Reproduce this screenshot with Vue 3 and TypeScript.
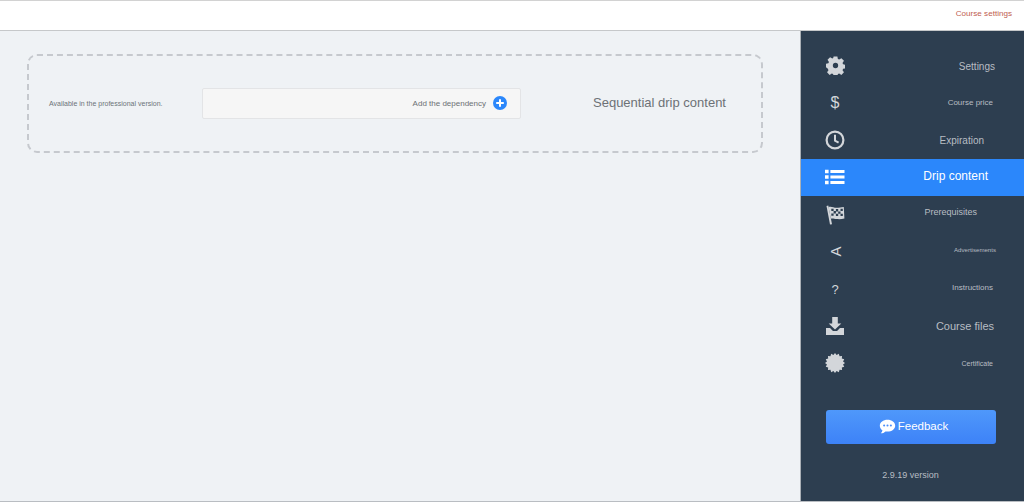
<script setup lang="ts">
interface Item { label: string; size: number; end: number; dy: number; icon: string; active?: boolean }
const items: Item[] = [
  { label: 'Settings', size: 10, end: 29, dy: 1, icon: 'gear' },
  { label: 'Course price', size: 8, end: 31, dy: -1, icon: 'dollar' },
  { label: 'Expiration', size: 10, end: 40, dy: 0, icon: 'clock' },
  { label: 'Drip content', size: 12, end: 36, dy: -1, icon: 'list', active: true },
  { label: 'Prerequisites', size: 9, end: 47, dy: -3, icon: 'flag' },
  { label: 'Advertisements', size: 6.1, end: 28, dy: -2, icon: 'ad' },
  { label: 'Instructions', size: 8, end: 31, dy: -2, icon: 'help' },
  { label: 'Course files', size: 11, end: 30, dy: 0, icon: 'download' },
  { label: 'Certificate', size: 7, end: 31, dy: 0, icon: 'badge' },
]
const burst = (() => {
  const pts: string[] = []
  for (let i = 0; i < 32; i++) {
    const r = i % 2 ? 8.2 : 10
    const a = (Math.PI * i) / 16
    pts.push(`${(10 + r * Math.cos(a)).toFixed(2)},${(10 + r * Math.sin(a)).toFixed(2)}`)
  }
  return pts.join(' ')
})()
</script>

<template>
  <div class="page">
    <header class="topbar"><span class="crumb">Course settings</span></header>
    <div class="body">
      <main class="main">
        <section class="drip">
          <span class="note">Available in the professional version.</span>
          <div class="dep">
            <span class="dep-label">Add the dependency</span>
            <svg class="plus" viewBox="0 0 14 14" width="14" height="14">
              <circle cx="7" cy="7" r="7" fill="#2b87fb" />
              <path d="M7 3.2v7.6M3.2 7h7.6" stroke="#fff" stroke-width="2" />
            </svg>
          </div>
          <h2 class="title">Sequential drip content</h2>
        </section>
      </main>
      <aside class="side">
        <nav class="nav">
          <div v-for="item in items" :key="item.label" class="row" :class="{ active: item.active }">
            <span class="icon">
              <svg v-if="item.icon === 'gear'" viewBox="0 0 20 20" width="19" height="19">
                <path fill="currentColor" fill-rule="evenodd" d="M8 .5h4l.5 2.700 1.400.6 2.300-1.500 2.700 2.800-1.500 2.200.6 1.400 2.500.5v3.800l-2.500.5-.6 1.400 1.500 2.200-2.700 2.800-2.300-1.500-1.400.6-.5 2.500H8l-.5-2.500-1.400-.6-2.300 1.500-2.700-2.800 1.500-2.200-.6-1.400L0 11.900V8.100l2.500-.5.600-1.400L1.600 4l2.700-2.800 2.300 1.500 1-.6zM10 7.200a2.800 2.800 0 1 0 0 5.600 2.800 2.800 0 0 0 0-5.600z" />
              </svg>
              <span v-else-if="item.icon === 'dollar'" class="glyph dollar">$</span>
              <svg v-else-if="item.icon === 'clock'" viewBox="0 0 20 20" width="20" height="20">
                <circle cx="10" cy="10" r="8.4" fill="none" stroke="currentColor" stroke-width="2.2" />
                <path d="M10 4.8v5.800l3.600 2" fill="none" stroke="currentColor" stroke-width="2" />
              </svg>
              <svg v-else-if="item.icon === 'list'" viewBox="0 0 20 16" width="20" height="16">
                <path fill="currentColor" d="M0 .8h3.600v3.400H0zM0 6.300h3.600v3.400H0zM0 11.800h3.600v3.400H0zM5.400 1.100H19.500v2.800H5.400zM5.400 6.600H19.500v2.800H5.400zM5.400 12.100H19.500v2.800H5.400z" />
              </svg>
              <svg v-else-if="item.icon === 'flag'" viewBox="0 0 20 20" width="20" height="20">
                <path fill="currentColor" d="M1.500 1 3.300.6l3.700 18.600-2 .4L3.600 12z" />
                <path fill="currentColor" d="M3.500 2c3-1 5 .8 8 .8 2.600 0 4.700-.6 7.300-.8l.6 11.500c-2.500.6-4.700 1-7.600.6-3-.4-4.300-.9-6-.3z" />
                <path fill="#2d3e50" d="M6.300 3.800h2.300v2.300H6.300zM10.900 4.100h2.300v2.300h-2.300zM15.500 3.800h2.300v2.300h-2.300zM8.600 6.100h2.300v2.300H8.600zM13.200 6.400h2.300v2.300h-2.300zM6.300 8.400h2.300v2.300H6.300zM10.900 8.700h2.300v2.300h-2.300zM15.500 8.700h2.300v2.300h-2.300z" />
              </svg>
              <span v-else-if="item.icon === 'ad'" class="glyph ad">A</span>
              <span v-else-if="item.icon === 'help'" class="glyph help">?</span>
              <svg v-else-if="item.icon === 'download'" viewBox="0 0 20 20" width="20" height="20">
                <path fill="currentColor" d="M7.200 1h5.600v6.500h3.500L10 13.500 3.700 7.500h3.500z" />
                <path fill="currentColor" d="M1 12h4l3 3h4l3-3h4v7H1z" />
              </svg>
              <svg v-else viewBox="0 0 20 20" width="20" height="20">
                <polygon fill="currentColor" :points="burst" />
              </svg>
            </span>
            <span class="label" :style="{ fontSize: item.size + 'px', marginRight: item.end + 'px', marginTop: item.dy * 2 + 'px' }">{{ item.label }}</span>
          </div>
        </nav>
        <button class="feedback" type="button">
          <svg viewBox="0 0 18 16" width="17" height="15">
            <path fill="#fff" d="M9 .8c4.500 0 8.200 2.800 8.200 6.300S13.500 13.400 9 13.400c-.8 0-1.500-.1-2.200-.2C5.500 14.500 3.800 15.200 1.800 15.300c1-.9 1.600-2 1.800-3.300C1.800 10.900.8 9.100.8 7.100.8 3.600 4.500.8 9 .8z" />
            <circle cx="5.400" cy="7" r="1.100" fill="#4a8ffb" />
            <circle cx="9" cy="7" r="1.100" fill="#4a8ffb" />
            <circle cx="12.600" cy="7" r="1.100" fill="#4a8ffb" />
          </svg>
          <span>Feedback</span>
        </button>
        <p class="version">2.9.19 version</p>
      </aside>
    </div>
  </div>
</template>

<style scoped>
.page {
  width: 1024px;
  height: 502px;
  display: flex;
  flex-direction: column;
  box-sizing: border-box;
  font-family: "Liberation Sans", Arial, sans-serif;
  background: #eff2f5;
  overflow: hidden;
  border-bottom: 1px solid #b9bdc2;
}
.topbar {
  height: 31px;
  box-sizing: border-box;
  flex: none;
  background: #fff;
  border-top: 1px solid #d2d2d2;
  border-bottom: 1px solid #c6c8ca;
  display: flex;
  align-items: center;
  justify-content: flex-end;
  padding: 0 12px 4px 0;
}
.crumb {
  font-size: 8.1px;
  color: #c0604f;
}
.body {
  flex: 1;
  display: flex;
  min-height: 0;
}
.main {
  flex: 1;
  min-width: 0;
  padding: 23px 37px 0 27px;
}
.drip {
  height: 99px;
  box-sizing: border-box;
  border: 2px dashed #c6c9ce;
  border-radius: 10px;
  display: flex;
  align-items: center;
  padding-left: 20px;
}
.note {
  width: 153px;
  flex: none;
  font-size: 7px;
  color: #6c7278;
}
.dep {
  width: 319px;
  height: 31px;
  box-sizing: border-box;
  flex: none;
  background: #f6f6f6;
  border: 1px solid #e3e4e6;
  border-radius: 2px;
  display: flex;
  align-items: center;
  justify-content: flex-end;
  gap: 7px;
  padding: 0 13px 1px 0;
}
.dep-label {
  font-size: 8px;
  color: #6c7074;
}
.plus {
  flex: none;
}
.title {
  margin: 0 0 2px 72px;
  font-size: 13px;
  font-weight: 400;
  color: #6d7176;
  white-space: nowrap;
}
.side {
  width: 224px;
  flex: none;
  box-sizing: border-box;
  background: #2d3e50;
  border-left: 1px solid #aab0b6;
  display: flex;
  flex-direction: column;
  padding-top: 16.3px;
}
.nav {
  display: grid;
  grid-auto-rows: 37.2px;
}
.row {
  display: flex;
  align-items: center;
  justify-content: space-between;
  padding-left: 24px;
  color: #b8bdc3;
}
.row.active {
  background: #2b87fb;
  color: #fff;
}
.icon {
  width: 20px;
  height: 20px;
  display: flex;
  align-items: center;
  justify-content: center;
  color: #d3d6da;
}
.row.active .icon {
  color: #fff;
}
.glyph {
  font-size: 16px;
  line-height: 1;
}
.ad {
  font-size: 15px;
  transform: rotate(-90deg);
}
.help {
  font-size: 13px;
}
.label {
  white-space: nowrap;
}
.feedback {
  margin: 28px 0 0 25px;
  width: 170px;
  height: 34px;
  border: 0;
  border-radius: 3px;
  background: linear-gradient(#4f98fb, #3d82f7);
  display: flex;
  align-items: center;
  justify-content: center;
  gap: 2px;
  padding: 0 0 1px 5px;
  color: #fff;
  font-family: inherit;
  font-size: 11.5px;
}
.version {
  margin: 26.5px 0 0;
  padding-right: 4px;
  text-align: center;
  font-size: 9px;
  color: #b8bdc3;
}
</style>
